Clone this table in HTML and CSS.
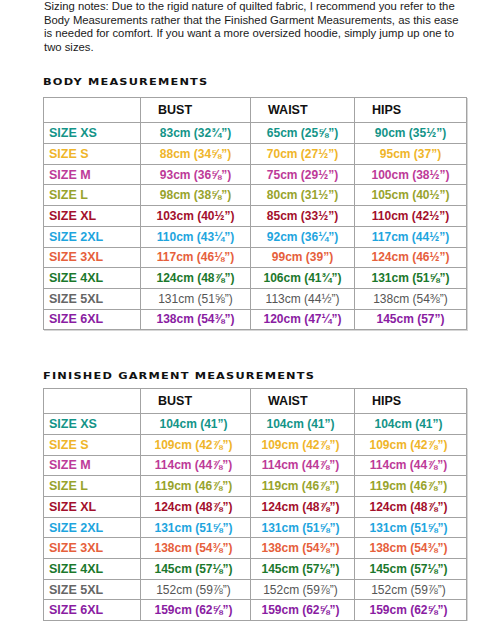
FILE: index.html
```html
<!DOCTYPE html>
<html lang="en">
<head>
<meta charset="utf-8">
<title>Sizing</title>
<link rel="stylesheet" href="styles.css">
</head>
<body>
<main class="page">
  <p class="notes">Sizing notes: Due to the rigid nature of quilted fabric, I recommend you refer to the Body Measurements rather that the Finished Garment Measurements, as this ease is needed for comfort. If you want a more oversized hoodie, simply jump up one to two sizes.</p>

  <section class="chart chart-body">
    <h2 class="chart-title"><span>BODY MEASUREMENTS</span></h2>
    <table class="sizes">
      <colgroup><col class="c-size"><col class="c-bust"><col class="c-waist"><col class="c-hips"></colgroup>
      <thead><tr><th></th><th>BUST</th><th>WAIST</th><th>HIPS</th></tr></thead>
      <tbody>
        <tr class="xs"><th>SIZE XS</th><td>83cm (32¾”)</td><td>65cm (25⅝”)</td><td>90cm (35½”)</td></tr>
        <tr class="s"><th>SIZE S</th><td>88cm (34⅝”)</td><td>70cm (27½”)</td><td>95cm (37”)</td></tr>
        <tr class="m"><th>SIZE M</th><td>93cm (36⅝”)</td><td>75cm (29½”)</td><td>100cm (38½”)</td></tr>
        <tr class="l"><th>SIZE L</th><td>98cm (38⅝”)</td><td>80cm (31½”)</td><td>105cm (40½”)</td></tr>
        <tr class="xl"><th>SIZE XL</th><td>103cm (40½”)</td><td>85cm (33½”)</td><td>110cm (42½”)</td></tr>
        <tr class="x2"><th>SIZE 2XL</th><td>110cm (43¼”)</td><td>92cm (36¼”)</td><td>117cm (44½”)</td></tr>
        <tr class="x3"><th>SIZE 3XL</th><td>117cm (46⅛”)</td><td>99cm (39”)</td><td>124cm (46½”)</td></tr>
        <tr class="x4"><th>SIZE 4XL</th><td>124cm (48⅞”)</td><td>106cm (41¾”)</td><td>131cm (51⅝”)</td></tr>
        <tr class="x5"><th>SIZE 5XL</th><td>131cm (51⅝”)</td><td>113cm (44½”)</td><td>138cm (54⅜”)</td></tr>
        <tr class="x6"><th>SIZE 6XL</th><td>138cm (54⅜”)</td><td>120cm (47¼”)</td><td>145cm (57”)</td></tr>
      </tbody>
    </table>
  </section>

  <section class="chart chart-finished">
    <h2 class="chart-title"><span>FINISHED GARMENT MEASUREMENTS</span></h2>
    <table class="sizes">
      <colgroup><col class="c-size"><col class="c-bust"><col class="c-waist"><col class="c-hips"></colgroup>
      <thead><tr><th></th><th>BUST</th><th>WAIST</th><th>HIPS</th></tr></thead>
      <tbody>
        <tr class="xs"><th>SIZE XS</th><td>104cm (41”)</td><td>104cm (41”)</td><td>104cm (41”)</td></tr>
        <tr class="s"><th>SIZE S</th><td>109cm (42⅞”)</td><td>109cm (42⅞”)</td><td>109cm (42⅞”)</td></tr>
        <tr class="m"><th>SIZE M</th><td>114cm (44⅞”)</td><td>114cm (44⅞”)</td><td>114cm (44⅞”)</td></tr>
        <tr class="l"><th>SIZE L</th><td>119cm (46⅞”)</td><td>119cm (46⅞”)</td><td>119cm (46⅞”)</td></tr>
        <tr class="xl"><th>SIZE XL</th><td>124cm (48⅞”)</td><td>124cm (48⅞”)</td><td>124cm (48⅞”)</td></tr>
        <tr class="x2"><th>SIZE 2XL</th><td>131cm (51⅝”)</td><td>131cm (51⅝”)</td><td>131cm (51⅝”)</td></tr>
        <tr class="x3"><th>SIZE 3XL</th><td>138cm (54⅜”)</td><td>138cm (54⅜”)</td><td>138cm (54⅜”)</td></tr>
        <tr class="x4"><th>SIZE 4XL</th><td>145cm (57⅛”)</td><td>145cm (57⅛”)</td><td>145cm (57⅛”)</td></tr>
        <tr class="x5"><th>SIZE 5XL</th><td>152cm (59⅞”)</td><td>152cm (59⅞”)</td><td>152cm (59⅞”)</td></tr>
        <tr class="x6"><th>SIZE 6XL</th><td>159cm (62⅝”)</td><td>159cm (62⅝”)</td><td>159cm (62⅝”)</td></tr>
      </tbody>
    </table>
  </section>
</main>
</body>
</html>
```
FILE: styles.css
```css
html, body {
  margin: 0;
  padding: 0;
  background: #fff;
}
body {
  font-family: "Liberation Sans", Arial, sans-serif;
  color: #1a1a1a;
}
.page {
  padding-left: 43px;
  width: 424px;
}
.notes {
  margin: 0 0 0 1px;
  font-size: 11.3px;
  line-height: 13.6px;
  width: 420px;
}
.chart-title {
  margin: 0;
  height: 12px;
  font-family: "DejaVu Sans", sans-serif;
  font-weight: bold;
  font-size: 8.6px;
  line-height: 12px;
  letter-spacing: 0.9px;
  color: #111;
}
.chart-title span {
  display: inline-block;
  transform: scaleX(1.32);
  transform-origin: left center;
  white-space: nowrap;
}
.chart-body .chart-title { margin-top: 22px; margin-bottom: 9px; }
.chart-finished .chart-title { margin-top: 40px; margin-bottom: 6px; }

.sizes {
  width: 423px;
  table-layout: fixed;
  border-collapse: collapse;
  border: 1.5px solid #8c8c8c;
  box-shadow: 1px 1px 0 #d6d6d6;
  font-size: 12px;
  font-weight: bold;
}
.c-size { width: 97px; }
.c-bust { width: 110px; }
.c-waist { width: 104px; }
.c-hips { width: 112px; }

.sizes th, .sizes td {
  border: 1px solid #a3a3a3;
  padding: 0;
  white-space: nowrap;
}
.sizes thead tr { height: 25px; }
.sizes thead th {
  text-align: left;
  padding-left: 17px;
  font-size: 12.5px;
  color: #111;
}
.sizes tbody tr { height: 20.7px; }
.sizes tbody th {
  text-align: left;
  padding-left: 5px;
  font-size: 12.5px;
}
.sizes tbody td {
  text-align: center;
}
.chart-finished .sizes tbody td {
  padding-right: 4px;
}

.xs { color: #139488; }
.s  { color: #efb52a; }
.m  { color: #bd3a98; }
.l  { color: #98a32c; }
.xl { color: #a30f2c; }
.x2 { color: #1ea5de; }
.x3 { color: #e6603c; }
.x4 { color: #1b782c; }
.x5 { color: #666; }
.x5 td { font-weight: normal; color: #555; }
.x6 { color: #8a1ca2; }
```
